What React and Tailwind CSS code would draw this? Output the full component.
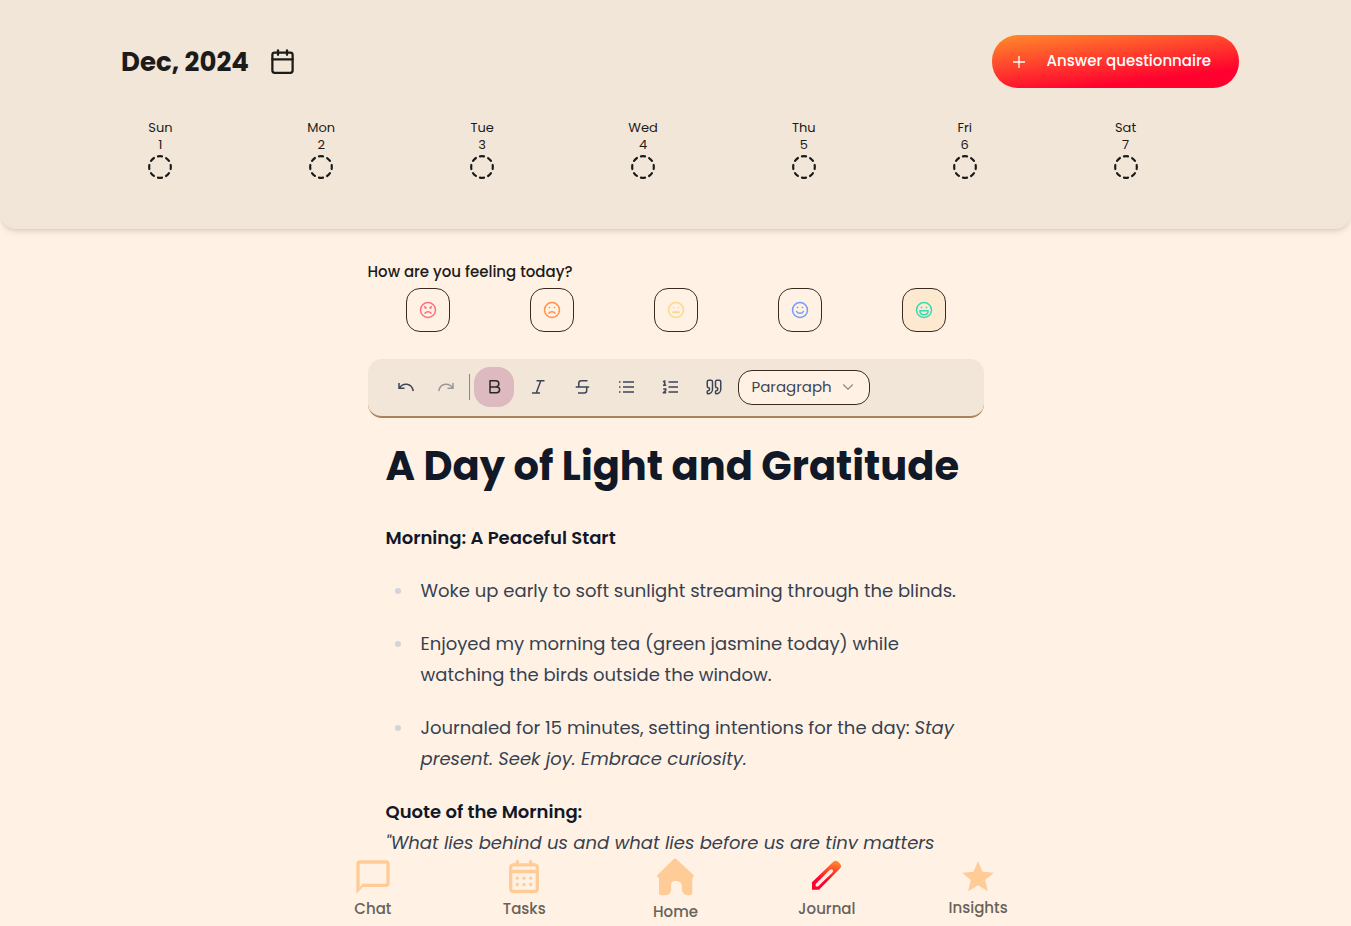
import React, { useState } from "react";
import { Calendar, CircleDashed, Quote, ChevronDown } from "lucide-react";
import { MdChatBubbleOutline, MdStar } from "react-icons/md";

const days = ["Sun", "Mon", "Tue", "Wed", "Thu", "Fri", "Sat"];

const moods = [
  { kind: "angry", label: "Angry", tone: "text-[#fb6f7f]" },
  { kind: "sad", label: "Sad", tone: "text-[#ff9248]" },
  { kind: "flat", label: "Neutral", tone: "text-[#fdd78e]" },
  { kind: "smile", label: "Happy", tone: "text-[#739dfb]" },
  { kind: "grin", label: "Great", tone: "text-[#34dcb4]" },
];

function Face({ kind }) {
  return (
    <svg width="18" height="18" viewBox="0 0 24 24" fill="none" stroke="currentColor" strokeWidth="2" strokeLinecap="round" strokeLinejoin="round">
      <circle cx="12" cy="12" r="10" />
      {kind === "angry" ? (
        <path d="M7.500 7.500 9.500 9M16.500 7.500 14.500 9M8.200 9.500v.1M15.800 9.500v.1" />
      ) : (
        <path d="M8.500 8.800h.3M15.200 8.800h.3" />
      )}
      {(kind === "angry" || kind === "sad") && <path d="M8 16.300c2-2.600 6-2.600 8 0" />}
      {kind === "flat" && <path d="M8 15h8" strokeWidth="2.400" />}
      {kind === "smile" && <path d="M7.500 14c1.800 3.200 7.200 3.200 9 0" />}
      {kind === "grin" && <path d="M6.500 12.900h11c0 3.200-2.300 5.400-5.500 5.400s-5.500-2.200-5.500-5.400z" />}
    </svg>
  );
}

function Tool({ label, active, muted, children }) {
  const tone = active ? "rounded-2xl bg-[#dcbac0] text-[#2b2626]" : muted ? "text-[#9b9894]" : "text-[#3d4657]";
  return (
    <button type="button" aria-label={label} aria-pressed={active} className={"flex size-10 shrink-0 items-center justify-center " + tone}>
      {children}
    </button>
  );
}

function Glyph({ children }) {
  return (
    <svg width="18" height="18" viewBox="0 0 18 18" fill="none" stroke="currentColor" strokeWidth="1.500">
      {children}
    </svg>
  );
}

function Toolbar() {
  return (
    <div className="mt-[27px] flex h-[59px] items-center rounded-[14px] border-b-2 border-[#a9835c] bg-[#f2e6d8] pb-px pl-[18px]">
      <Tool label="Undo">
        <Glyph><path d="M2 5v5.200h5.500M2.500 9.800C6 4.500 14.500 4.500 16.300 13" /></Glyph>
      </Tool>
      <Tool label="Redo" muted>
        <Glyph><path d="M16 5v5.200h-5.500M15.500 9.800C12 4.500 3.500 4.500 1.700 13" /></Glyph>
      </Tool>
      <div className="ml-[3px] mr-1 h-[26px] w-px bg-[#a9835c]" />
      <div className="flex items-center gap-1">
        <Tool label="Bold" active>
          <Glyph><path d="M5 2.800h5.800a3 3 0 0 1 0 6.100H5zM5 8.900h6.700a2.900 2.900 0 0 1 0 5.800H5z" strokeLinejoin="round" /></Glyph>
        </Tool>
        <Tool label="Italic">
          <Glyph><path d="M7.500 2.800h8M3 15h8M11.800 2.800 7.200 15" /></Glyph>
        </Tool>
        <Tool label="Strikethrough">
          <Glyph><path d="M14.500 2.800H8.300a2.500 2.500 0 0 0-2.500 2.500V9M2.700 9h13.500M13.700 9v3.500a2.500 2.500 0 0 1-2.500 2.500H5" /></Glyph>
        </Tool>
        <Tool label="Bulleted list">
          <Glyph><path d="M6 4h11M6 9h11M6 14h11M2 4h1.500M2 9h1.500M2 14h1.500" /></Glyph>
        </Tool>
        <Tool label="Numbered list">
          <Glyph>
            <path d="M7.500 4H17M7.500 9H17M7.500 14H17" />
            <path d="M2 3.700 3.700 3v4.200M2 7.200h3.200M2.200 11h2.500v1.600L2.400 14.600v.2H5.200" strokeWidth="1.500" />
          </Glyph>
        </Tool>
        <Tool label="Quote"><Quote size={18} /></Tool>
        <div className="grid items-center">
          <select aria-label="Block type" className="col-start-1 row-start-1 h-[35px] w-[132px] appearance-none rounded-[14px] border border-[#3a2a20] bg-[#fff2e4] pl-[13px] text-[15px] text-[#3d4657]">
            <option>Paragraph</option>
            <option>Heading</option>
            <option>Quote</option>
          </select>
          <ChevronDown size={18} strokeWidth={1.5} className="pointer-events-none col-start-1 row-start-1 mr-[13px] justify-self-end text-[#8d8b8a]" />
        </div>
      </div>
    </div>
  );
}

function Bullet({ children }) {
  return (
    <li className="flex gap-5 before:mt-[13px] before:size-1.5 before:shrink-0 before:rounded-full before:bg-[#d1d5db]">
      <p>{children}</p>
    </li>
  );
}

function Entry() {
  return (
    <article className="flex flex-col gap-[22px] px-[18px] pt-[26px] text-lg leading-[31px] text-[#374151]">
      <h2 className="mb-3 text-[40px] font-bold leading-[44px] text-[#111827]">A Day of Light and Gratitude</h2>
      <p><strong className="font-semibold text-[#111827]">Morning: A Peaceful Start</strong></p>
      <ul className="flex flex-col gap-[22px] pl-[9px]">
        <Bullet>Woke up early to soft sunlight streaming through the blinds.</Bullet>
        <Bullet>Enjoyed my morning tea (green jasmine today) while watching the birds outside the window.</Bullet>
        <Bullet>Journaled for 15 minutes, setting intentions for the day: <em>Stay present. Seek joy. Embrace curiosity.</em></Bullet>
      </ul>
      <p>
        <strong className="font-semibold text-[#111827]">Quote of the Morning:</strong>
        <br />
        <em>"What lies behind us and what lies before us are tiny matters</em>
      </p>
    </article>
  );
}

function TasksIcon() {
  return (
    <svg width="40" height="40" viewBox="0 0 40 40" fill="none" stroke="currentColor" strokeWidth="3.300" strokeLinecap="round">
      <rect x="6.700" y="7.900" width="26.600" height="26.600" rx="2.500" />
      <path d="M6.700 14.500h26.600" />
      <path d="M13.300 4.600v3M26.700 4.600v3" />
      <path d="M13.300 21.200h.01M20 21.200h.01M26.700 21.200h.01M13.300 27.500h.01M20 27.500h.01M26.700 27.500h.01" />
    </svg>
  );
}

function HomeIcon() {
  return (
    <svg width="43" height="43" viewBox="0 0 43 43" fill="currentColor">
      <path d="M19.500 2.200Q21 .6 22.500 2.200L39.500 18Q41 19.800 38.300 20.700V35.500Q38.300 38.300 35.500 38.300H33Q28.500 37.500 28 33V29C28 25.500 25 24 21.500 24S17 25.500 17 29V33Q16.500 37.500 12 38.300H7.500Q5 38.300 5 35.500V20.700Q2 19.800 3.500 18Z" />
    </svg>
  );
}

function PencilIcon() {
  return (
    <svg width="40" height="40" viewBox="0 0 40 40">
      <defs>
        <linearGradient id="pencil" x1="0.700" y1="0" x2="0.550" y2="1">
          <stop offset="0" stopColor="#ff8c2a" />
          <stop offset="0.700" stopColor="#ff002f" />
        </linearGradient>
      </defs>
      <path fill="url(#pencil)" fillRule="evenodd" d="M5 25.300 26.300 4.700Q28.700 2.600 31 4.700L33 6.800Q35.200 9.200 33 11.600L12 32.700H5ZM8.700 26.900V29.500H11L25.200 15.800Q26.700 14 25.700 12.700 24.300 11.600 22.600 13Z" />
    </svg>
  );
}

function NavItem({ label, current, children }) {
  return (
    <a href="#" aria-current={current ? "page" : undefined} className="flex flex-1 flex-col items-center text-[15px] font-medium leading-6 text-[#68635b]">
      <span className="text-[#ffcb96]">{children}</span>
      {label}
    </a>
  );
}

export default function App() {
  const [mood, setMood] = useState("grin");
  return (
    <div className="flex h-screen flex-col overflow-hidden bg-[#fff2e4] font-['Poppins','Inter',sans-serif] text-[#1c1b1a]">
      <header className="relative shrink-0 rounded-b-2xl bg-[#f2e6d8] pb-[49px] pt-[35px] shadow-md">
        <div className="flex items-center justify-between pl-[121px] pr-28">
          <div className="flex items-center gap-5">
            <h1 className="text-[26px] font-bold leading-10">Dec, 2024</h1>
            <button type="button" aria-label="Pick a date"><Calendar size={27} /></button>
          </div>
          <button type="button" className="flex h-[53px] items-center gap-[21px] rounded-[26px] bg-[linear-gradient(173deg,#ff8c2a_0%,#ff002f_78%)] pl-5 pr-7 text-[15px] font-medium text-white">
            <svg width="14" height="14" viewBox="0 0 14 14" stroke="currentColor" strokeWidth="1.300"><path d="M7 1v12M1 7h12" /></svg>
            Answer questionnaire
          </button>
        </div>
        <ol className="mt-[31px] grid grid-cols-7 pl-20 pr-[145px] text-[13px] leading-[17px]">
          {days.map((day, i) => (
            <li key={day} className="flex flex-col items-center">
              <span>{day}</span>
              <span>{i + 1}</span>
              <CircleDashed size={26} className="mt-px" />
            </li>
          ))}
        </ol>
      </header>

      <main className="mx-auto min-h-0 w-full max-w-[616px] flex-1 overflow-y-auto pt-[31px] [scrollbar-width:none]">
        <p className="text-[15px] font-medium leading-6">How are you feeling today?</p>
        <div className="mt-1 flex justify-between px-[38px]">
          {moods.map((m) => (
            <button
              key={m.kind}
              type="button"
              aria-label={m.label}
              aria-pressed={mood === m.kind}
              onClick={() => setMood(m.kind)}
              className={"flex size-11 items-center justify-center rounded-[14px] border border-[#3a2a20] " + m.tone + (mood === m.kind ? " bg-[#fde8d0]" : "")}
            >
              <Face kind={m.kind} />
            </button>
          ))}
        </div>
        <Toolbar />
        <Entry />
      </main>

      <nav className="mx-auto flex h-[77px] w-[56%] shrink-0 items-start pt-2">
        <NavItem label="Chat"><MdChatBubbleOutline size={40} /></NavItem>
        <NavItem label="Tasks"><TasksIcon /></NavItem>
        <NavItem label="Home"><HomeIcon /></NavItem>
        <NavItem label="Journal" current><PencilIcon /></NavItem>
        <NavItem label="Insights"><MdStar size={38} className="mt-px" /></NavItem>
      </nav>
    </div>
  );
}
